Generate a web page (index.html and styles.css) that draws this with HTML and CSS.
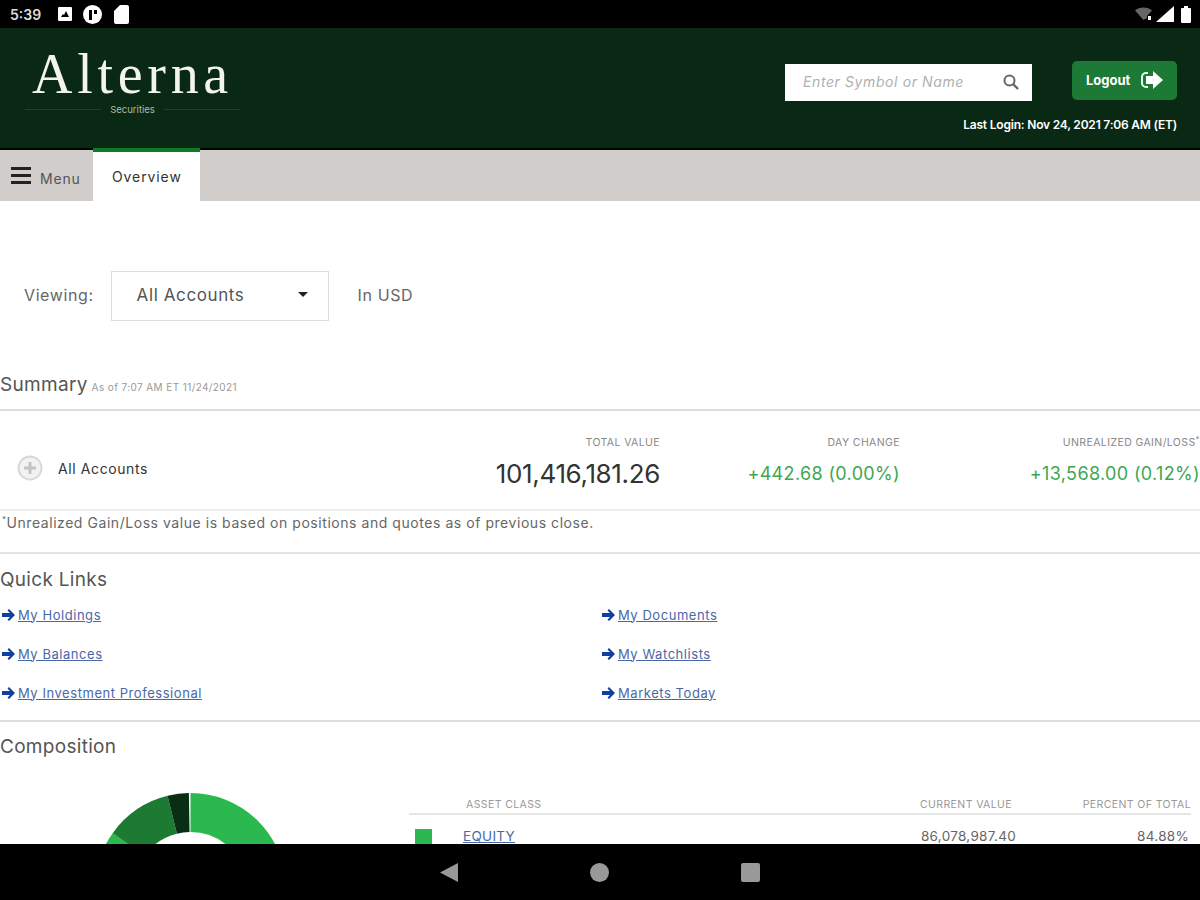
FILE: index.html
```html
<!DOCTYPE html>
<html lang="en">

<head>
    <meta charset="UTF-8">
    <title>Alterna Securities - Overview</title>
    <link rel="stylesheet" href="styles.css">
</head>

<body>
    <div class="status-bar">
        <div class="status-left">
            <span class="clock">5:39</span>
            <svg class="st-photo" width="14" height="14" viewBox="0 0 14 14"><path fill="#fff" fill-rule="evenodd" d="M1 0h12a1 1 0 0 1 1 1v12a1 1 0 0 1-1 1H1a1 1 0 0 1-1-1V1a1 1 0 0 1 1-1zM3 10h8L8 4l-2 4-1-1z"/></svg>
            <svg class="st-circle" width="19" height="19" viewBox="0 0 19 19"><circle cx="9.500" cy="9.500" r="9.500" fill="#fff"/><path fill="#000" d="M6 5h3v10H6zM11 5h3v4h-3z"/></svg>
            <svg class="st-card" width="15" height="19" viewBox="0 0 15 19"><path fill="#fff" d="M6 0h7a2 2 0 0 1 2 2v15a2 2 0 0 1-2 2H2a2 2 0 0 1-2-2V6z"/></svg>
        </div>
        <div class="status-right">
            <svg width="17" height="14" viewBox="0 0 17 14"><path fill="#666" d="M0 3.500C4-.5 13-.5 17 3.500L12 9v2L8.500 13z"/><path fill="#fff" d="M13 9h3v4h-3z"/></svg>
            <svg width="18" height="16" viewBox="0 0 18 16"><path fill="#fff" d="M18 0v16H0z"/></svg>
            <svg class="st-batt" width="10" height="17" viewBox="0 0 10 17"><path fill="#fff" d="M3 0h4v2h2a1 1 0 0 1 1 1v13a1 1 0 0 1-1 1H1a1 1 0 0 1-1-1V3a1 1 0 0 1 1-1h2z"/></svg>
        </div>
    </div>

    <header class="top-header">
        <div class="logo">
            <div class="logo-name">Alterna</div>
            <div class="logo-sub">Securities</div>
        </div>
        <div class="header-right">
            <div class="header-actions">
                <div class="search-box">
                    <span class="search-hint">Enter Symbol or Name</span>
                    <svg width="16" height="16" viewBox="0 0 16 16"><circle cx="6.500" cy="6.500" r="5" fill="none" stroke="#666" stroke-width="2"/><path stroke="#666" stroke-width="2.400" d="M10 10l5 5"/></svg>
                </div>
                <div class="logout-btn">
                    <span>Logout</span>
                    <svg width="22" height="18" viewBox="0 0 22 18"><path fill="none" stroke="#dfe" stroke-width="2" d="M7 2H5a4 4 0 0 0-4 4v6a4 4 0 0 0 4 4h2"/><path fill="#fff" d="M12 0l10 9-10 9v-5H5V5h7z"/></svg>
                </div>
            </div>
            <div class="last-login">Last Login: Nov 24, 2021 7:06 AM (ET)</div>
        </div>
    </header>

    <nav class="tab-bar">
        <div class="menu-btn">
            <span class="burger"><i></i><i></i><i></i></span>
            <span class="menu-text">Menu</span>
        </div>
        <div class="tab-active">Overview</div>
    </nav>

    <main class="content">
        <div class="viewing-row">
            <span class="viewing-label">Viewing:</span>
            <div class="account-select">
                <span>All Accounts</span>
                <span class="caret"></span>
            </div>
            <span class="viewing-label">In USD</span>
        </div>

        <div class="section-title summary-title">
            <h2>Summary</h2>
            <small>As of 7:07 AM ET 11/24/2021</small>
        </div>
        <div class="summary-row">
            <div class="summary-name">
                <svg width="26" height="26" viewBox="0 0 26 26"><circle cx="13" cy="13" r="11.500" fill="#f2f2f2" stroke="#d8d8d8" stroke-width="2"/><path stroke="#c4c4c4" stroke-width="3" d="M13 7v12M7 13h12"/></svg>
                <span>All Accounts</span>
            </div>
            <div class="stat stat-total">
                <div class="stat-label">TOTAL VALUE</div>
                <div class="stat-value big">101,416,181.26</div>
            </div>
            <div class="stat stat-day">
                <div class="stat-label">DAY CHANGE</div>
                <div class="stat-value up">+442.68 (0.00%)</div>
            </div>
            <div class="stat stat-gain">
                <div class="stat-label">UNREALIZED GAIN/LOSS<sup>*</sup></div>
                <div class="stat-value up">+13,568.00 (0.12%)</div>
            </div>
        </div>
        <p class="footnote"><sup>*</sup>Unrealized Gain/Loss value is based on positions and quotes as of previous close.</p>

        <section class="quick-links">
            <h2>Quick Links</h2>
            <div class="link-grid">
                <a href="#"><svg width="13" height="12" viewBox="0 0 13 12"><path fill="#0f3fa0" d="M7 0l6 6-6 6-1.500-1.500L8 8H0V4h8L5.500 1.500z"/></svg>My Holdings</a>
                <a href="#"><svg width="13" height="12" viewBox="0 0 13 12"><path fill="#0f3fa0" d="M7 0l6 6-6 6-1.500-1.500L8 8H0V4h8L5.500 1.500z"/></svg>My Documents</a>
                <a href="#"><svg width="13" height="12" viewBox="0 0 13 12"><path fill="#0f3fa0" d="M7 0l6 6-6 6-1.500-1.500L8 8H0V4h8L5.500 1.500z"/></svg>My Balances</a>
                <a href="#"><svg width="13" height="12" viewBox="0 0 13 12"><path fill="#0f3fa0" d="M7 0l6 6-6 6-1.500-1.500L8 8H0V4h8L5.500 1.500z"/></svg>My Watchlists</a>
                <a href="#"><svg width="13" height="12" viewBox="0 0 13 12"><path fill="#0f3fa0" d="M7 0l6 6-6 6-1.500-1.500L8 8H0V4h8L5.500 1.500z"/></svg>My Investment Professional</a>
                <a href="#"><svg width="13" height="12" viewBox="0 0 13 12"><path fill="#0f3fa0" d="M7 0l6 6-6 6-1.500-1.500L8 8H0V4h8L5.500 1.500z"/></svg>Markets Today</a>
            </div>
        </section>

        <section class="composition">
            <h2>Composition</h2>
            <div class="comp-body">
                <svg class="donut" width="191" height="191" viewBox="0 0 191 191">
                    <g transform="rotate(-90 95.500 95.500)" fill="none" stroke-width="39">
                        <circle cx="95.500" cy="95.500" r="76" pathLength="360" stroke="#2bb84f" stroke-dasharray="305.400 360"/>
                        <circle cx="95.500" cy="95.500" r="76" pathLength="360" stroke="#1c7a33" stroke-dasharray="40.600 360" stroke-dashoffset="-305.400"/>
                        <circle cx="95.500" cy="95.500" r="76" pathLength="360" stroke="#0a2e14" stroke-dasharray="13 360" stroke-dashoffset="-346"/>
                    </g>
                </svg>
                <table class="comp-table">
                    <thead>
                        <tr>
                            <th class="col-class">ASSET CLASS</th>
                            <th class="col-value">CURRENT VALUE</th>
                            <th class="col-pct">PERCENT OF TOTAL</th>
                        </tr>
                    </thead>
                    <tbody>
                        <tr>
                            <td class="col-class"><span class="swatch"></span><a href="#">EQUITY</a></td>
                            <td>86,078,987.40</td>
                            <td class="col-pct">84.88%</td>
                        </tr>
                    </tbody>
                </table>
            </div>
        </section>
    </main>

    <div class="nav-bar">
        <svg width="18" height="19" viewBox="0 0 18 19"><path fill="#999" d="M18 0v19L0 9.500z"/></svg>
        <svg width="19" height="19" viewBox="0 0 19 19"><circle cx="9.500" cy="9.500" r="9.500" fill="#999"/></svg>
        <svg width="19" height="19" viewBox="0 0 19 19"><rect width="19" height="19" rx="2" fill="#999"/></svg>
    </div>
</body>

</html>
```

FILE: styles.css
```css
/* General Styles */
* {
    box-sizing: border-box;
}

body {
    display: flex;
    flex-direction: column;
    width: 1200px;
    height: 900px;
    margin: 0;
    overflow: hidden;
    font-family: Inter, "Open Sans", sans-serif;
    background-color: #ffffff;
    color: #444;
}

h2 {
    margin: 0;
    font-size: 19px;
    font-weight: 400;
    letter-spacing: 0.3px;
    color: #555;
}

/* Status Bar */
.status-bar {
    display: flex;
    justify-content: space-between;
    align-items: center;
    flex: 0 0 28px;
    padding: 0 9px 0 10px;
    background: #000;
}

.status-left,
.status-right {
    display: flex;
    align-items: center;
}

.clock {
    width: 48px;
    font-size: 14px;
    font-weight: 600;
    color: #ddd;
}

.st-circle {
    margin-left: 11px;
}

.st-card {
    margin-left: 12px;
}

.status-right {
    gap: 4px;
}

.st-batt {
    margin-left: 3px;
}

/* Header */
.top-header {
    display: flex;
    justify-content: space-between;
    flex: 0 0 122px;
    padding: 16px 23px 0 25px;
    background: #0a2914;
    border-bottom: 2px solid #000;
}

.logo {
    width: 215px;
    text-align: center;
}

.logo-name {
    font-family: "Liberation Serif", serif;
    font-size: 56px;
    line-height: 60px;
    letter-spacing: 4.700px;
    color: #f4f4ee;
}

.logo-sub {
    display: flex;
    align-items: center;
    gap: 9px;
    font-size: 9.500px;
    line-height: 11px;
    color: #a9bda9;
}

.logo-sub::before,
.logo-sub::after {
    content: "";
    flex: 1;
    height: 1px;
    background: #234029;
}

.header-right {
    display: flex;
    flex-direction: column;
    align-items: flex-end;
    padding-top: 16px;
}

.header-actions {
    display: flex;
    align-items: center;
    gap: 40px;
}

.search-box {
    display: flex;
    justify-content: space-between;
    align-items: center;
    width: 247px;
    height: 37px;
    margin-top: 4px;
    padding: 0 13px 2px 18px;
    background: #fff;
}

.search-hint {
    font-size: 14px;
    font-style: italic;
    letter-spacing: 0.6px;
    color: #b0b0b0;
}

.logout-btn {
    display: flex;
    justify-content: space-between;
    align-items: center;
    width: 105px;
    height: 39px;
    padding: 0 14px 2px;
    background: #1c7a36;
    border-radius: 5px;
    font-size: 13px;
    font-weight: 700;
    color: #fff;
}

.last-login {
    margin-top: 16px;
    font-size: 12px;
    font-weight: 600;
    letter-spacing: -0.2px;
    color: #fff;
}

/* Tabs */
.tab-bar {
    display: flex;
    flex: 0 0 51px;
    background: #d0cdcb;
}

.menu-btn {
    display: flex;
    align-items: center;
    width: 93px;
    padding: 0 0 0 11px;
    gap: 9px;
    font-size: 14px;
    letter-spacing: 0.8px;
    color: #555;
}

.menu-text {
    margin-top: 5px;
}

.burger {
    display: flex;
    flex-direction: column;
    gap: 4px;
}

.burger i {
    display: block;
    width: 20px;
    height: 3px;
    background: #222;
}

.tab-active {
    width: 107px;
    margin-top: -2px;
    padding: 16px 0 0 19px;
    background: #fff;
    border-top: 4px solid #0f7a26;
    font-size: 14px;
    letter-spacing: 0.9px;
    color: #333;
}

/* Content */
.content {
    flex: 1;
    min-height: 0;
    overflow: hidden;
}

.viewing-row {
    display: flex;
    align-items: center;
    height: 50px;
    margin-top: 70px;
    padding-left: 24px;
    font-size: 16px;
    letter-spacing: 0.6px;
}

.viewing-label {
    margin-top: -3px;
    color: #666;
}

.account-select {
    display: flex;
    justify-content: space-between;
    align-items: center;
    width: 218px;
    height: 50px;
    margin: 0 29px 0 17px;
    padding: 0 20px 3px 25px;
    border: 1px solid #ddd;
    font-size: 17px;
    letter-spacing: 0.6px;
    color: #555;
}

.caret {
    border-top: 5px solid #222;
    border-left: 5px solid transparent;
    border-right: 5px solid transparent;
}

.summary-title {
    display: flex;
    align-items: baseline;
    gap: 4px;
    height: 90px;
    padding-top: 52px;
    border-bottom: 2px solid #ddd;
}

.summary-title small {
    font-size: 10px;
    letter-spacing: 0.4px;
    color: #999;
}

.summary-row {
    display: flex;
    align-items: center;
    height: 100px;
    border-bottom: 2px solid #eee;
}

.summary-name {
    display: flex;
    align-items: center;
    gap: 15px;
    width: 420px;
    margin-top: 16px;
    padding-left: 17px;
    font-size: 14px;
    letter-spacing: 0.6px;
    color: #333;
}

.stat {
    margin-top: 4px;
    text-align: right;
}

.stat-total {
    width: 240px;
}

.stat-day {
    width: 240px;
}

.stat-gain {
    width: 300px;
}

.stat-label {
    font-size: 10.500px;
    letter-spacing: 0.4px;
    color: #888;
}

.stat-label sup {
    font-size: 8px;
    line-height: 0;
}

.stat-value {
    margin-top: 11px;
    font-size: 18px;
    line-height: 28px;
    letter-spacing: 0.35px;
    color: #333;
}

.stat-value.big {
    font-size: 26px;
    letter-spacing: -0.35px;
}

.stat-value.up {
    color: #3fa652;
}

.footnote {
    height: 43px;
    margin: 0;
    padding: 3px 0 0 2px;
    border-bottom: 2px solid #e4e4e4;
    font-size: 14px;
    line-height: 18px;
    letter-spacing: 0.55px;
    color: #666;
}

.footnote sup {
    font-size: 8px;
    line-height: 0;
}

/* Quick Links */
.quick-links {
    height: 168px;
    padding-top: 15px;
    border-bottom: 2px solid #ddd;
}

.quick-links h2 {
    line-height: 22px;
}

.link-grid {
    display: grid;
    grid-template-columns: 600px 1fr;
    grid-auto-rows: 39px;
    margin-top: 4px;
    align-items: center;
}

.link-grid a {
    display: block;
    font-size: 13px;
    letter-spacing: 0.55px;
    color: #4a68a8;
}

.link-grid svg {
    margin: 0 3px 0 2px;
    vertical-align: -1px;
}

/* Composition */
.composition {
    padding-top: 14px;
}

.composition h2 {
    line-height: 22px;
}

.comp-body {
    display: flex;
    align-items: flex-start;
    margin-top: 35px;
}

.donut {
    flex: none;
    margin: 0 123px 0 95px;
}

.comp-table {
    flex: 1;
    margin-top: 2px;
    margin-right: 9px;
    border-collapse: collapse;
    font-size: 13.500px;
    letter-spacing: 0.3px;
    color: #666;
}

.comp-table th {
    height: 19px;
    padding: 0;
    border-bottom: 2px solid #e6e6e6;
    font-size: 10.500px;
    font-weight: 400;
    letter-spacing: 0.4px;
    text-align: right;
    color: #999;
}

.comp-table td {
    padding: 13px 0 0;
    text-align: right;
}

.comp-table .col-class {
    width: 421px;
    padding-left: 54px;
    text-align: left;
}

.comp-table th.col-class {
    padding-left: 57px;
}

.comp-table th.col-value {
    padding-right: 4px;
}

.comp-table .col-pct {
    width: 175px;
}

.comp-table td.col-pct {
    padding-right: 2px;
}

.comp-table td.col-class {
    position: relative;
}

.swatch {
    position: absolute;
    left: 6px;
    top: 14px;
    width: 17px;
    height: 17px;
    background: #2bb84f;
}

.comp-table a {
    color: #4a68a8;
}

/* Nav Bar */
.nav-bar {
    display: flex;
    justify-content: center;
    align-items: center;
    gap: 132px;
    flex: 0 0 56px;
    background: #000;
}
```
